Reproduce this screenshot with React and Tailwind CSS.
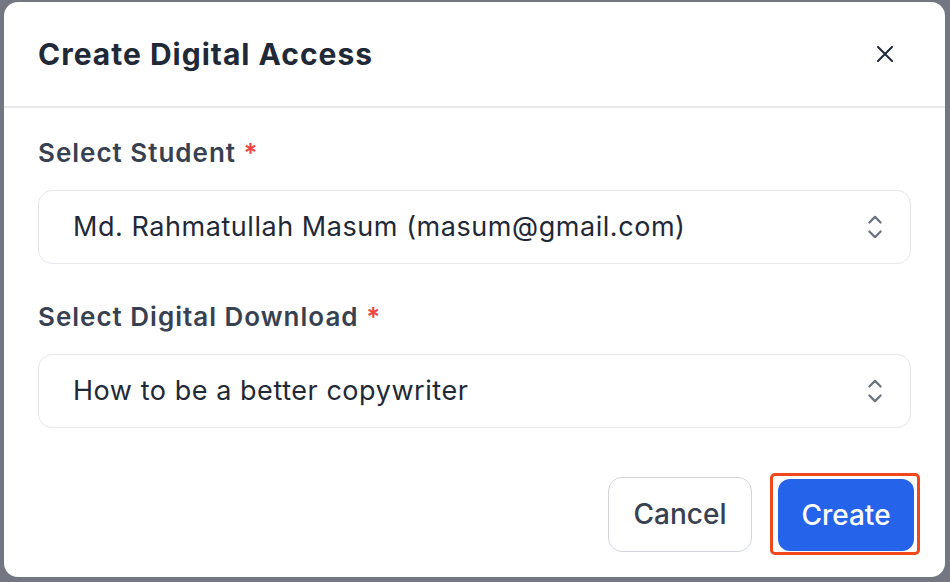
import { useState } from "react";

function ChevronUpDown() {
  return (
    <svg
      width="36"
      height="36"
      viewBox="0 0 24 24"
      fill="none"
      stroke="#6b7280"
      strokeWidth="1.5"
      strokeLinecap="round"
      strokeLinejoin="round"
    >
      <path d="M8.25 15L12 18.75 15.75 15m-7.5-6L12 5.25 15.75 9" />
    </svg>
  );
}

function SelectBox({ value }) {
  return (
    <button className="w-full h-[74px] rounded-[14px] border-[1.5px] border-[#e5e7eb] bg-white pl-[34px] pr-[17px] flex items-center justify-between text-left">
      <span className="text-[27px] tracking-[0.55px] text-[#1f2937]">{value}</span>
      <ChevronUpDown />
    </button>
  );
}

function Label({ children }) {
  return (
    <label className="block h-[36px] leading-[36px] text-[26px] tracking-[1px] font-semibold text-[#374151] mb-[19px]">
      {children} <span className="text-[#ef4444]">*</span>
    </label>
  );
}

export default function App() {
  const [student] = useState("Md. Rahmatullah Masum (masum@gmail.com)");
  const [download] = useState("How to be a better copywriter");

  return (
    <div className="w-[950px] h-[582px] bg-[#747781] pt-[2px] pl-[4px] font-['Inter',sans-serif] overflow-hidden">
      <div className="w-[941px] h-[575px] rounded-[14px] bg-white flex flex-col">
        <div className="h-[106px] border-b-2 border-[#e5e7eb] flex items-center justify-between pl-[34px] pr-[52px]">
          <h2 className="text-[30px] tracking-[1px] font-bold text-[#1f2937]">Create Digital Access</h2>
          <button className="text-[#1f2937]">
            <svg width="16" height="16" viewBox="0 0 16 16" fill="none" stroke="currentColor" strokeWidth="2" strokeLinecap="round">
              <path d="M1 1L15 15M15 1L1 15" />
            </svg>
          </button>
        </div>

        <div className="pt-[27px] pl-[34px] pr-[34px]">
          <Label>Select Student</Label>
          <SelectBox value={student} />
          <div className="mt-[35px]">
            <Label>Select Digital Download</Label>
            <SelectBox value={download} />
          </div>
        </div>

        <div className="mt-[45px] flex items-center justify-end gap-[18px] pr-[25px]">
          <button className="w-[144px] h-[75px] rounded-[14px] border-[1.5px] border-[#d1d5db] bg-white text-[28px] font-medium text-[#374151]">
            Cancel
          </button>
          <div className="border-[3px] border-[#f1471d] rounded-[5px] pl-[5px] pr-[3px] pt-[3px] pb-[1px]">
            <button className="w-[136px] h-[72px] rounded-[12px] bg-[#2563eb] text-[28px] font-medium text-white">
              Create
            </button>
          </div>
        </div>
      </div>
    </div>
  );
}
